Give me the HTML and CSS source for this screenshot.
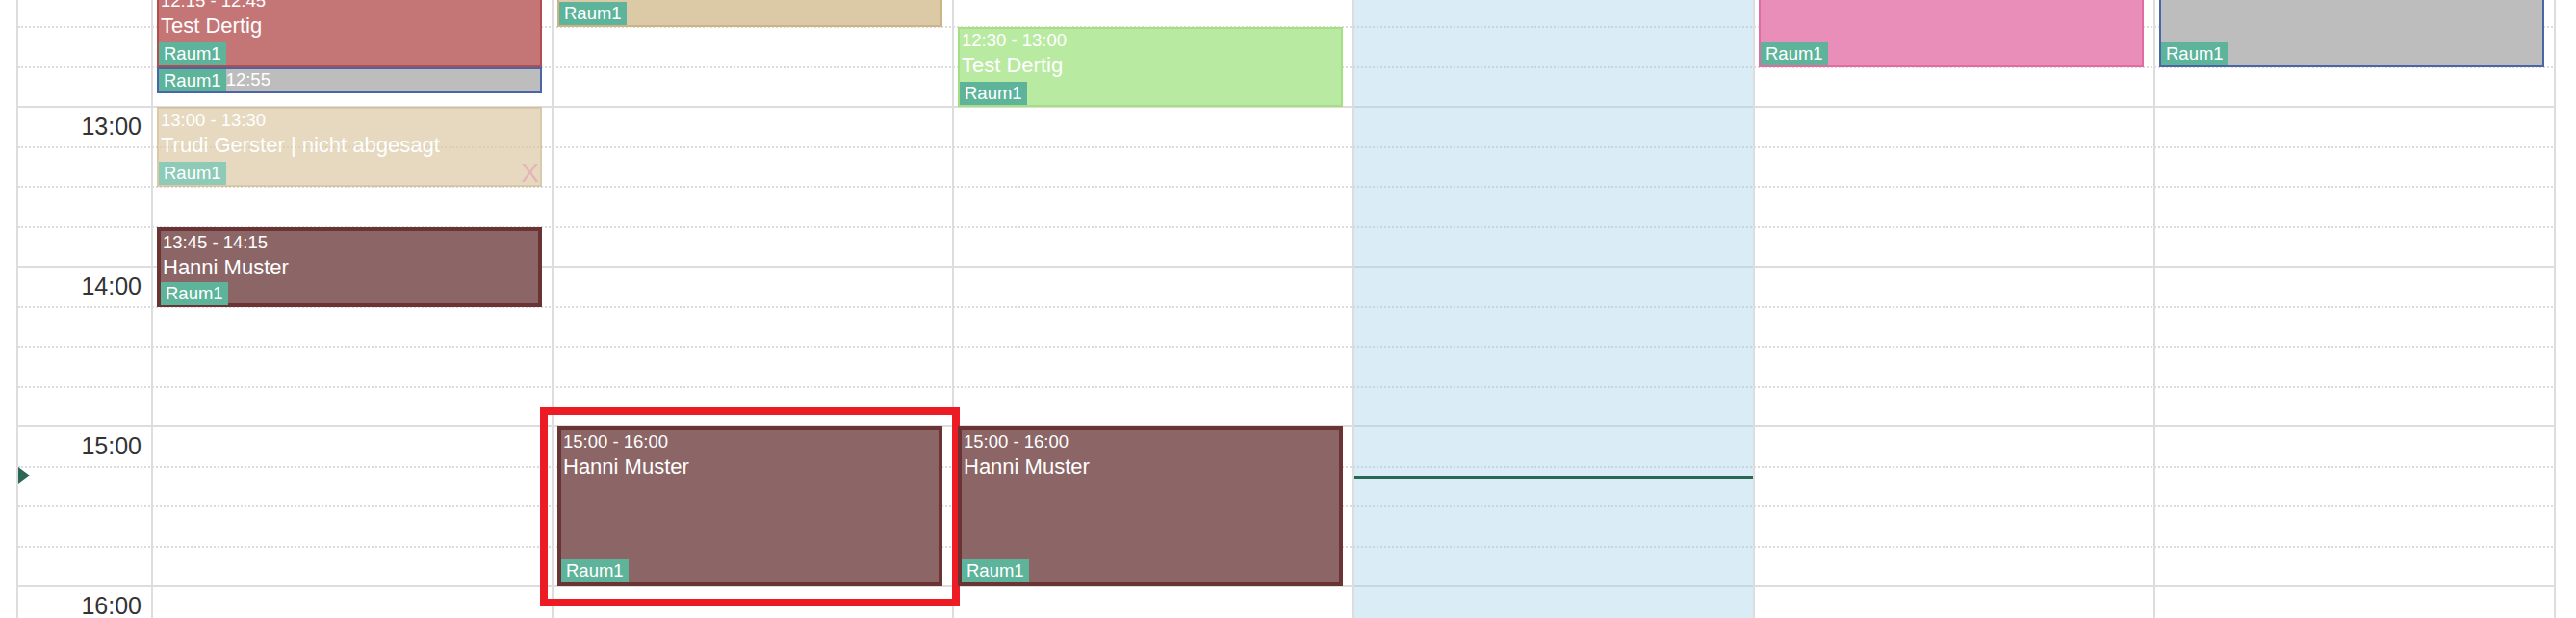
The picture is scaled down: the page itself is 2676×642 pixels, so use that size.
FILE: index.html
```html
<!DOCTYPE html>
<html lang="de">
<head>
    <meta charset="UTF-8">
    <meta name="viewport" content="width=device-width, initial-scale=1.0">
    <title>Kalender</title>
    <link rel="stylesheet" href="styles.css">
</head>
<body>
    <div class="viewport">
        <div class="calendar">
            <!-- time slots (background rows) -->
            <div class="slats">
                <div class="hour">
                    <div class="slot"></div>
                    <div class="slot"></div>
                    <div class="slot"></div>
                    <div class="slot"></div>
                </div>
                <div class="hour">
                    <div class="slot"><div class="time">13:00</div></div>
                    <div class="slot"></div>
                    <div class="slot"></div>
                    <div class="slot"></div>
                </div>
                <div class="hour">
                    <div class="slot"><div class="time">14:00</div></div>
                    <div class="slot"></div>
                    <div class="slot"></div>
                    <div class="slot"></div>
                </div>
                <div class="hour">
                    <div class="slot"><div class="time">15:00</div></div>
                    <div class="slot"></div>
                    <div class="slot"></div>
                    <div class="slot"></div>
                </div>
                <div class="hour">
                    <div class="slot"><div class="time">16:00</div></div>
                    <div class="slot"></div>
                    <div class="slot"></div>
                    <div class="slot"></div>
                </div>
            </div>

            <!-- day columns with events -->
            <div class="cols">
                <div class="axis">
                    <div class="now-arrow" style="top: 541px;"></div>
                </div>

                <div class="col">
                    <div class="event ev-red" style="top: 42.5px; height: 83px;">
                        <div class="ev-time">12:15 - 12:45</div>
                        <div class="ev-title">Test Dertig</div>
                        <span class="tag">Raum1</span>
                    </div>
                    <div class="event event-short ev-grey" style="top: 125.5px; height: 27.7px;">
                        <span class="tag">Raum1</span>
                        <span class="ev-end">12:55</span>
                    </div>
                    <div class="event ev-tan cancelled" style="top: 167px; height: 83px;">
                        <div class="ev-time">13:00 - 13:30</div>
                        <div class="ev-title">Trudi Gerster | nicht abgesagt</div>
                        <div class="ev-foot">
                            <span class="tag">Raum1</span>
                            <span class="ev-x">X</span>
                        </div>
                    </div>
                    <div class="event ev-dark" style="top: 291.5px; height: 83px;">
                        <div class="ev-time">13:45 - 14:15</div>
                        <div class="ev-title">Hanni Muster</div>
                        <span class="tag">Raum1</span>
                    </div>
                </div>

                <div class="col">
                    <div class="event ev-tan" style="top: 1px; height: 83px;">
                        <span class="tag">Raum1</span>
                    </div>
                    <div class="event ev-dark" style="top: 499px; height: 166px;">
                        <div class="ev-time">15:00 - 16:00</div>
                        <div class="ev-title">Hanni Muster</div>
                        <span class="tag">Raum1</span>
                    </div>
                    <div class="highlight" style="top: 479px;"></div>
                </div>

                <div class="col">
                    <div class="event ev-green" style="top: 84px; height: 83px;">
                        <div class="ev-time">12:30 - 13:00</div>
                        <div class="ev-title">Test Dertig</div>
                        <span class="tag">Raum1</span>
                    </div>
                    <div class="event ev-dark" style="top: 499px; height: 166px;">
                        <div class="ev-time">15:00 - 16:00</div>
                        <div class="ev-title">Hanni Muster</div>
                        <span class="tag">Raum1</span>
                    </div>
                </div>

                <div class="col today">
                    <div class="now-line" style="top: 550px;"></div>
                </div>

                <div class="col">
                    <div class="event ev-pink" style="top: 1px; height: 124.5px;">
                        <span class="tag">Raum1</span>
                    </div>
                </div>

                <div class="col">
                    <div class="event ev-grey" style="top: 1px; height: 124.5px;">
                        <span class="tag">Raum1</span>
                    </div>
                </div>
            </div>
        </div>
    </div>
</body>
</html>
```

FILE: styles.css
```css
body {
    margin: 0;
    background-color: #fff;
    color: #333;
    font-family: "Liberation Sans", Arial, Helvetica, sans-serif;
}
.viewport {
    height: 642px;
    overflow: hidden;
}
.calendar {
    position: relative;
    width: 2638px;
    margin: -56px 0 0 17px;
    border-left: 2px solid #ddd;
    box-sizing: border-box;
}
/* background rows */
.hour {
    display: flex;
    flex-direction: column;
    height: 166px;
}
.slot {
    flex: 1;
    box-sizing: border-box;
    border-top: 2px dotted #dcdcdc;
}
.slot:first-child {
    border-top: 2px solid #ddd;
}
.time {
    width: 140px;
    box-sizing: border-box;
    padding: 4px 12px 0 0;
    text-align: right;
    font-size: 25px;
    line-height: 30px;
    color: #333;
}
/* day columns on top of the rows */
.cols {
    position: absolute;
    top: 0;
    left: 0;
    right: 0;
    bottom: 0;
    display: grid;
    grid-template-columns: 140px repeat(6, 416px);
}
.axis,
.col {
    position: relative;
    border-right: 2px solid #ddd;
}
.today {
    background-color: rgba(163, 211, 234, 0.4);
}
.now-line {
    position: absolute;
    left: 0;
    right: 0;
    height: 4px;
    background-color: #2a6856;
}
.now-arrow {
    position: absolute;
    left: 0;
    width: 0;
    height: 0;
    border-top: 9.5px solid transparent;
    border-bottom: 9.5px solid transparent;
    border-left: 12px solid #2a6856;
}
/* events */
.event {
    position: absolute;
    left: 4px;
    right: 10px;
    box-sizing: border-box;
    display: flex;
    flex-direction: column;
    padding-top: 1px;
    border: 2px solid;
    color: #fff;
}
.ev-time {
    padding-left: 2px;
    font-size: 18.5px;
    line-height: 22px;
    white-space: nowrap;
}
.ev-title {
    padding-left: 2px;
    font-size: 22px;
    line-height: 30px;
    white-space: nowrap;
}
.tag {
    align-self: flex-start;
    margin-top: auto;
    padding: 0 5px;
    background-color: #5db49b;
    color: #fff;
    font-size: 18.5px;
    line-height: 24px;
}
.event-short {
    flex-direction: row;
    align-items: center;
    padding-top: 0;
}
.event-short .tag {
    margin-top: 0;
    align-self: center;
    line-height: 23px;
}
.ev-end {
    font-size: 18.5px;
    line-height: 22px;
}
.ev-foot {
    display: flex;
    justify-content: space-between;
    align-items: flex-end;
    margin-top: auto;
}
.ev-x {
    padding-right: 1px;
    font-size: 28px;
    line-height: 24px;
    color: #de9499;
}
.cancelled {
    opacity: 0.7;
}
.ev-red {
    background-color: #c47676;
    border-color: #b34d4d;
}
.ev-grey {
    background-color: #bdbdbd;
    border-color: #4a66a6;
}
.ev-tan {
    background-color: #dccaa6;
    border-color: #cdb487;
}
.ev-dark {
    background-color: #8c6666;
    border: 4px solid #6b3434;
}
.ev-green {
    background-color: #b9eaa1;
    border-color: #a4e083;
}
.ev-pink {
    background-color: #e88eb9;
    border-color: #e06ca2;
}
/* red marker frame around the selected appointment */
.highlight {
    position: absolute;
    left: -14px;
    width: 436px;
    height: 207px;
    box-sizing: border-box;
    border: 8px solid #ed1c24;
    pointer-events: none;
}
```
